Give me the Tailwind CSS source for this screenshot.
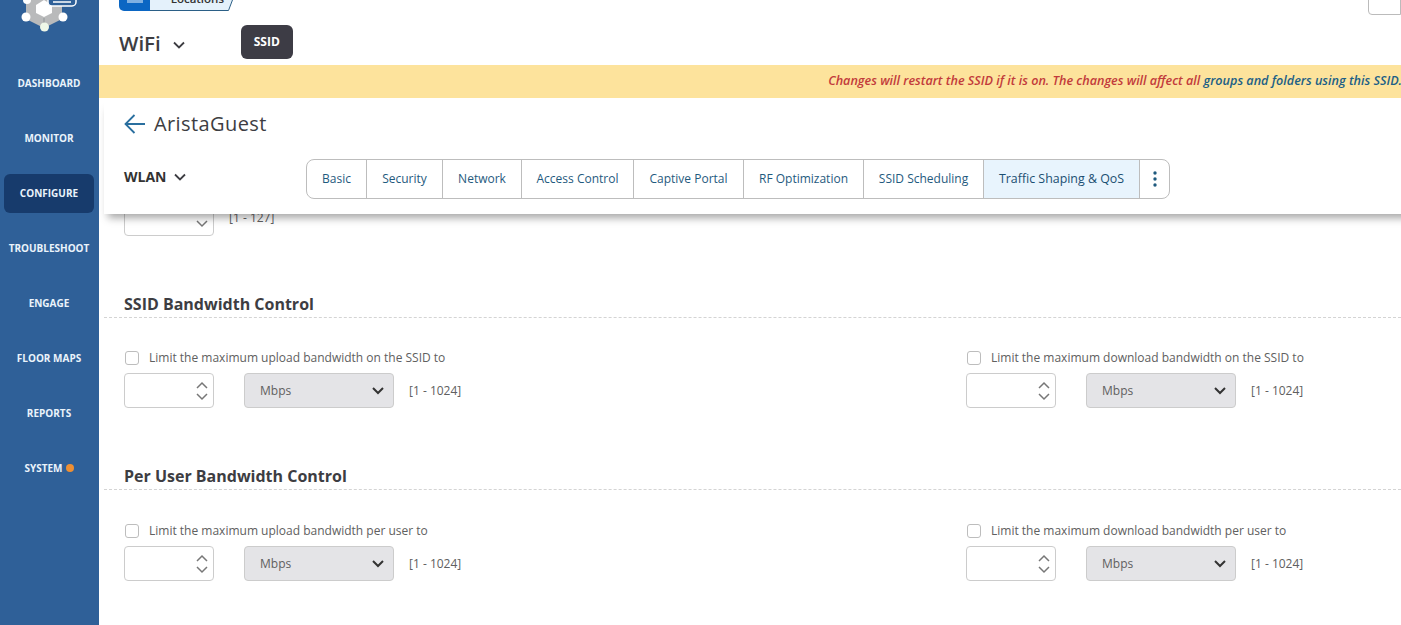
<!DOCTYPE html>
<html>
<head>
<meta charset="utf-8">
<script src="https://cdn.jsdelivr.net/npm/@tailwindcss/browser@4"></script>
</head>
<body class="m-0 overflow-hidden bg-white font-['Open_Sans',sans-serif]">
<div class="flex h-[625px] w-[1401px] overflow-hidden">
  <aside class="flex h-full w-[99px] shrink-0 flex-col bg-[#2f6098] pr-px text-[10px] font-bold text-[#eaf3fb]">
    <div class="h-[56px] shrink-0 overflow-hidden">
      <svg width="99" height="34" viewBox="0 0 99 34">
        <polygon points="44,-8 62,2 62,19 44,28 26,19 26,2" fill="#b9babb"/>
        <polygon points="44,0 52,5 52,13 44,17 36,13 36,5" fill="#fff"/>
        <line x1="44" y1="18" x2="44" y2="28" stroke="#8f9698" stroke-width="1"/>
        <circle cx="26" cy="17" r="4.5" fill="#fff"/>
        <circle cx="63" cy="17" r="4.5" fill="#fff"/>
        <circle cx="44.500" cy="27" r="4.500" fill="#eef7e8"/>
        <circle cx="27" cy="0" r="4" fill="#fff"/>
        <rect x="48" y="-6" width="28" height="12" rx="4" fill="#2f6098" stroke="#fff" stroke-width="1.500"/>
        <line x1="53" y1="2" x2="71" y2="2" stroke="#fff" stroke-width="1.500"/>
      </svg>
    </div>
    <a class="flex h-[55px] shrink-0 items-center justify-center">DASHBOARD</a>
    <a class="flex h-[55px] shrink-0 items-center justify-center">MONITOR</a>
    <a class="mx-1 my-2 flex h-[39px] shrink-0 items-center justify-center rounded-md bg-[#173b6c]">CONFIGURE</a>
    <a class="flex h-[55px] shrink-0 items-center justify-center">TROUBLESHOOT</a>
    <a class="flex h-[55px] shrink-0 items-center justify-center">ENGAGE</a>
    <a class="flex h-[55px] shrink-0 items-center justify-center">FLOOR MAPS</a>
    <a class="flex h-[55px] shrink-0 items-center justify-center">REPORTS</a>
    <a class="flex h-[55px] shrink-0 items-center justify-center gap-[3px]">SYSTEM<span class="-mt-[1px] h-2 w-2 rounded-full bg-[#ee8f33]"></span></a>
  </aside>

  <main class="relative min-w-0 flex-1 overflow-hidden">
    <div class="relative flow-root h-[65px]">
      <div class="-mt-[12px] ml-5 flex h-[23px] w-[118px]">
        <div class="flex w-[31px] justify-center rounded-bl-[5px] bg-[#0b66c3]"><span class="h-[15px] w-[16px] bg-[#7fb0e2]"></span></div>
        <div class="flex w-[78px] items-center justify-end border-b border-[#2b5f86] bg-[#e4f1fb] pr-[4px] text-[11.5px] font-semibold text-[#333]">Locations</div>
        <svg width="9" height="23" viewBox="0 0 9 23"><polygon points="0,0 9,0 0,22.500" fill="#e4f1fb"/><path d="M9 0L0.500 22.500H0" fill="none" stroke="#2b5f86"/></svg>
      </div>
      <div class="absolute -top-[10px] right-0 h-[25px] w-[33px] rounded-bl-[4px] border border-[#bbbbbb] bg-white"></div>
      <div class="mt-[11px] flex items-center pl-5">
        <span class="pt-[2px] text-[20.500px] leading-[38px] font-semibold text-[#3d3d42]">WiFi</span>
        <svg class="ml-[12px] mt-[5px]" width="12" height="8" viewBox="0 0 12 8" fill="none" stroke="#3d3d42" stroke-width="1.800"><path d="M1 1.500l5 5 5-5"/></svg>
        <span class="ml-[56px] flex h-[34px] w-[52px] items-center justify-center rounded-md bg-[#3d3c45] text-[12px] font-bold text-white">SSID</span>
      </div>
    </div>

    <div class="flex h-[33px] items-center justify-end whitespace-nowrap bg-[#fde39c] text-[12.600px] font-semibold italic text-[#c23b3b]">
      <p class="-mr-[1px]">Changes will restart the SSID if it is on. The changes will affect all <span class="text-[#1c5f86]">groups and folders using this SSID.</span></p>
    </div>

    <header class="relative z-10 ml-[5px] -mr-4 h-[116px] bg-white pl-5 shadow-[0_8px_8px_-4px_rgba(0,0,0,0.35)]">
      <div class="-ml-[5px] flex h-[52px] items-center pl-[5px]">
        <svg width="22" height="22" viewBox="0 0 22 22" fill="none" stroke="#2a6f9f" stroke-width="1.800"><path d="M21 11H2M10.500 2L1.500 11l9 9"/></svg>
        <h1 class="ml-[8px] text-[20px] font-normal tracking-[0.4px] text-[#3d3d42]">AristaGuest</h1>
      </div>
      <div class="flex items-start">
        <div class="-ml-[5px] flex h-[50px] w-[187px] items-center pt-[2px] pl-[5px]">
          <span class="text-[14px] font-bold text-[#333]">WLAN</span>
          <svg class="ml-[7px] mt-[2px]" width="12" height="8" viewBox="0 0 12 8" fill="none" stroke="#3d3d42" stroke-width="1.800"><path d="M1 1.500l5 5 5-5"/></svg>
        </div>
        <nav class="mt-[9px] flex h-[40px] items-stretch rounded-lg border border-[#bdbdbd] text-[12px] text-[#1f5a7e]">
          <a class="flex w-[60px] items-center justify-center border-r border-[#bdbdbd]">Basic</a>
          <a class="flex w-[76px] items-center justify-center border-r border-[#bdbdbd]">Security</a>
          <a class="flex w-[79px] items-center justify-center border-r border-[#bdbdbd]">Network</a>
          <a class="flex w-[112px] items-center justify-center border-r border-[#bdbdbd]">Access Control</a>
          <a class="flex w-[110px] items-center justify-center border-r border-[#bdbdbd]">Captive Portal</a>
          <a class="flex w-[120px] items-center justify-center border-r border-[#bdbdbd]">RF Optimization</a>
          <a class="flex w-[120px] items-center justify-center border-r border-[#bdbdbd]">SSID Scheduling</a>
          <a class="flex w-[156px] items-center justify-center border-r border-[#bdbdbd] bg-[#e8f4fd] text-[12.400px] font-medium text-[#1b4f72]">Traffic Shaping &amp; QoS</a>
          <a class="flex w-[29px] items-center justify-center">
            <svg width="4" height="18" viewBox="0 0 4 18" fill="#1f5a7e"><circle cx="2" cy="3" r="1.700"/><circle cx="2" cy="9" r="1.700"/><circle cx="2" cy="15" r="1.700"/></svg>
          </a>
        </nav>
      </div>
    </header>

    <section class="relative -mt-[12px] h-[415px] text-[12px] text-[#606060]">
      <div class="ml-[25px] flex items-center">
        <div class="flex h-[34px] w-[90px] items-end justify-end rounded border border-[#cccccc] pr-[5px] pb-[7px]">
          <svg width="12" height="8" viewBox="0 0 12 8" fill="none" stroke="#777" stroke-width="1.500"><path d="M1 1l5 5 5-5"/></svg>
        </div>
        <span class="ml-[15px] mb-[2px]">[1 - 127]</span>
      </div>

      <div class="mt-[54px] ml-[5px] flex h-[28px] items-center border-b border-dashed border-[#d4d4d4] pl-5 text-[16px] font-bold text-[#3d3d42]">SSID Bandwidth Control</div>
      <div class="mt-[31px] ml-[25px] grid grid-cols-[842px_1fr]">
        <div>
          <label class="flex items-center gap-[10px] pl-px"><span class="h-[14px] w-[14px] rounded-[3px] border border-[#bdbdbd]"></span>Limit the maximum upload bandwidth on the SSID to</label>
          <div class="mt-[6px] flex items-center">
            <div class="flex h-[35px] w-[90px] flex-col items-end justify-center gap-[4px] rounded border border-[#cccccc] pr-[5px]">
              <svg width="12" height="8" viewBox="0 0 12 8" fill="none" stroke="#777" stroke-width="1.500"><path d="M1 7l5-5 5 5"/></svg>
              <svg width="12" height="8" viewBox="0 0 12 8" fill="none" stroke="#777" stroke-width="1.500"><path d="M1 1l5 5 5-5"/></svg>
            </div>
            <div class="ml-[30px] flex h-[35px] w-[150px] items-center justify-between rounded border border-[#cccccc] bg-[#e4e4e7] pr-[9px] pl-[15px]">Mbps
              <svg width="12" height="8" viewBox="0 0 12 8" fill="none" stroke="#333" stroke-width="2"><path d="M1 1l5 5 5-5"/></svg>
            </div>
            <span class="ml-[15px]">[1 - 1024]</span>
          </div>
        </div>
        <div>
          <label class="flex items-center gap-[10px] pl-px"><span class="h-[14px] w-[14px] rounded-[3px] border border-[#bdbdbd]"></span>Limit the maximum download bandwidth on the SSID to</label>
          <div class="mt-[6px] flex items-center">
            <div class="flex h-[35px] w-[90px] flex-col items-end justify-center gap-[4px] rounded border border-[#cccccc] pr-[5px]">
              <svg width="12" height="8" viewBox="0 0 12 8" fill="none" stroke="#777" stroke-width="1.500"><path d="M1 7l5-5 5 5"/></svg>
              <svg width="12" height="8" viewBox="0 0 12 8" fill="none" stroke="#777" stroke-width="1.500"><path d="M1 1l5 5 5-5"/></svg>
            </div>
            <div class="ml-[30px] flex h-[35px] w-[150px] items-center justify-between rounded border border-[#cccccc] bg-[#e4e4e7] pr-[9px] pl-[15px]">Mbps
              <svg width="12" height="8" viewBox="0 0 12 8" fill="none" stroke="#333" stroke-width="2"><path d="M1 1l5 5 5-5"/></svg>
            </div>
            <span class="ml-[15px]">[1 - 1024]</span>
          </div>
        </div>
      </div>

      <div class="mt-[54px] ml-[5px] flex h-[28px] items-center border-b border-dashed border-[#d4d4d4] pl-5 text-[16px] font-bold text-[#3d3d42]">Per User Bandwidth Control</div>
      <div class="mt-[32px] ml-[25px] grid grid-cols-[842px_1fr]">
        <div>
          <label class="flex items-center gap-[10px] pl-px"><span class="h-[14px] w-[14px] rounded-[3px] border border-[#bdbdbd]"></span>Limit the maximum upload bandwidth per user to</label>
          <div class="mt-[6px] flex items-center">
            <div class="flex h-[35px] w-[90px] flex-col items-end justify-center gap-[4px] rounded border border-[#cccccc] pr-[5px]">
              <svg width="12" height="8" viewBox="0 0 12 8" fill="none" stroke="#777" stroke-width="1.500"><path d="M1 7l5-5 5 5"/></svg>
              <svg width="12" height="8" viewBox="0 0 12 8" fill="none" stroke="#777" stroke-width="1.500"><path d="M1 1l5 5 5-5"/></svg>
            </div>
            <div class="ml-[30px] flex h-[35px] w-[150px] items-center justify-between rounded border border-[#cccccc] bg-[#e4e4e7] pr-[9px] pl-[15px]">Mbps
              <svg width="12" height="8" viewBox="0 0 12 8" fill="none" stroke="#333" stroke-width="2"><path d="M1 1l5 5 5-5"/></svg>
            </div>
            <span class="ml-[15px]">[1 - 1024]</span>
          </div>
        </div>
        <div>
          <label class="flex items-center gap-[10px] pl-px"><span class="h-[14px] w-[14px] rounded-[3px] border border-[#bdbdbd]"></span>Limit the maximum download bandwidth per user to</label>
          <div class="mt-[6px] flex items-center">
            <div class="flex h-[35px] w-[90px] flex-col items-end justify-center gap-[4px] rounded border border-[#cccccc] pr-[5px]">
              <svg width="12" height="8" viewBox="0 0 12 8" fill="none" stroke="#777" stroke-width="1.500"><path d="M1 7l5-5 5 5"/></svg>
              <svg width="12" height="8" viewBox="0 0 12 8" fill="none" stroke="#777" stroke-width="1.500"><path d="M1 1l5 5 5-5"/></svg>
            </div>
            <div class="ml-[30px] flex h-[35px] w-[150px] items-center justify-between rounded border border-[#cccccc] bg-[#e4e4e7] pr-[9px] pl-[15px]">Mbps
              <svg width="12" height="8" viewBox="0 0 12 8" fill="none" stroke="#333" stroke-width="2"><path d="M1 1l5 5 5-5"/></svg>
            </div>
            <span class="ml-[15px]">[1 - 1024]</span>
          </div>
        </div>
      </div>
    </section>
  </main>
</div>
</body>
</html>
